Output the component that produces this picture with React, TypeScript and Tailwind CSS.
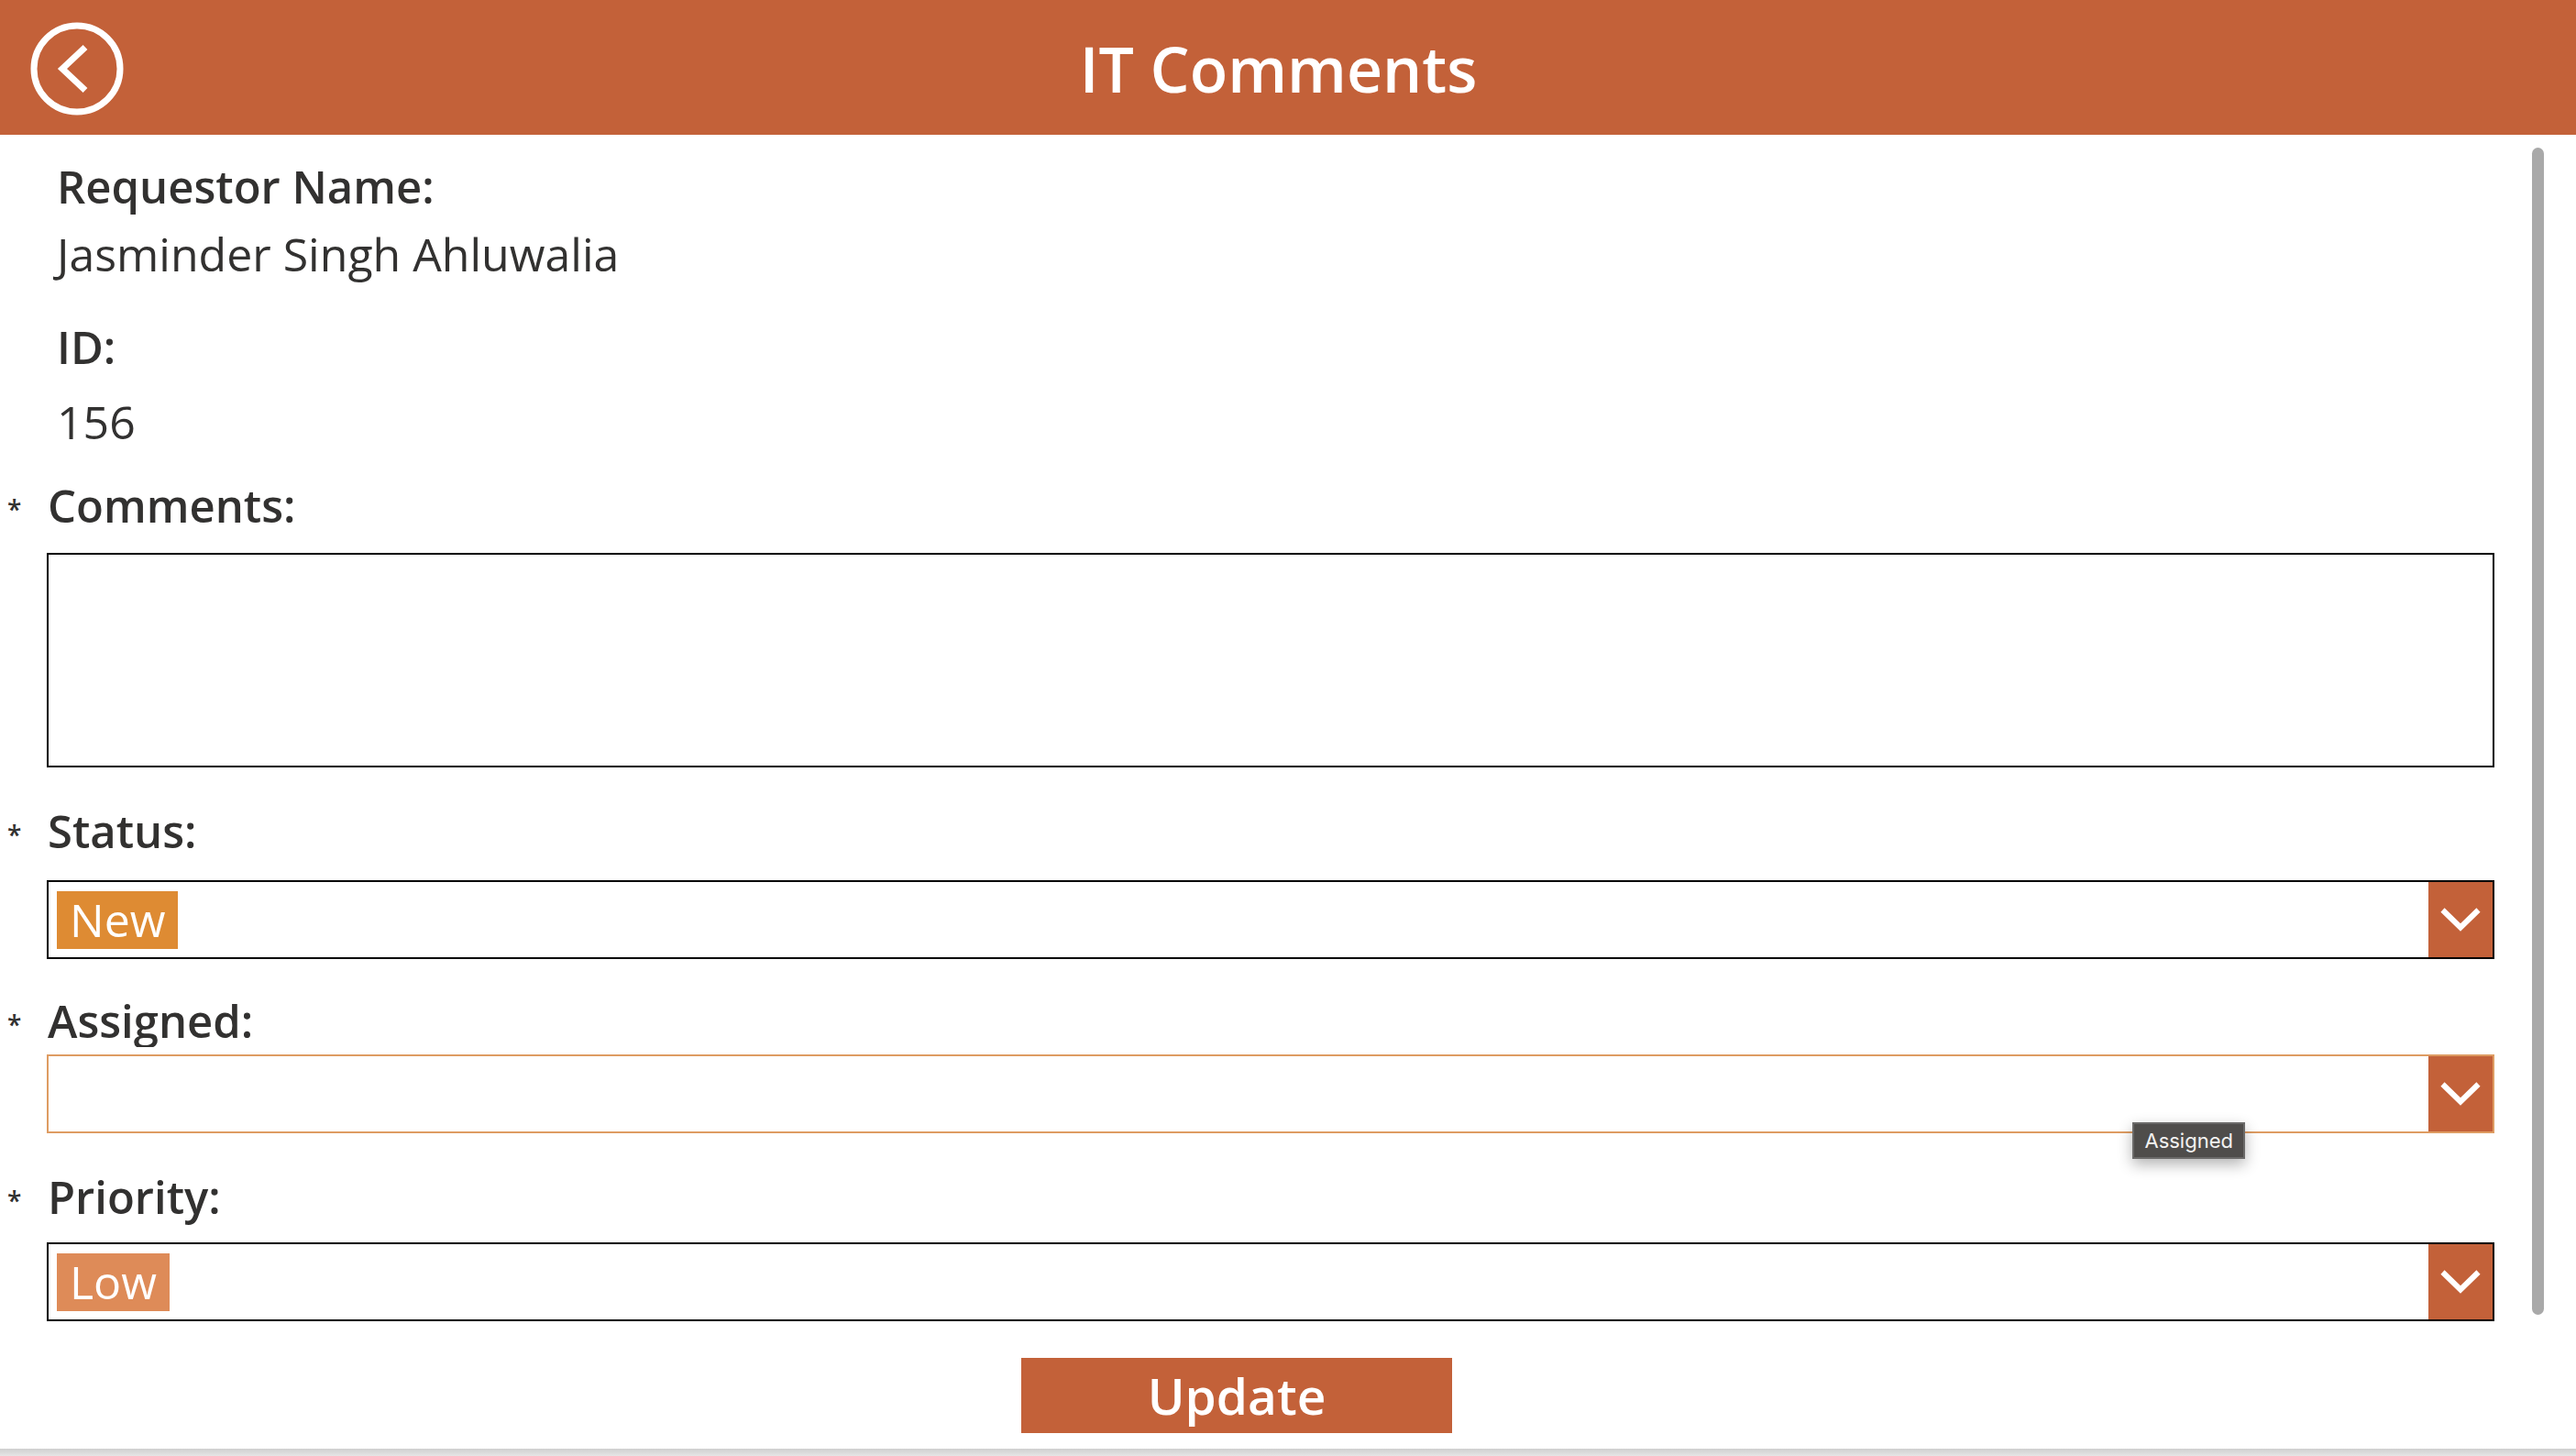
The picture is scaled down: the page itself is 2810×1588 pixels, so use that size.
import { useRef, useState } from "react";
import type { ReactNode } from "react";

function BackIcon() {
  return (
    <svg viewBox="0 0 102 102" className="size-[102px]" fill="none" stroke="white" aria-hidden="true">
      <circle cx="51" cy="51" r="47" strokeWidth="7" />
      <path d="M60 27.500 L35 51 L60 74.500" strokeWidth="7" />
    </svg>
  );
}

function ChevronDown() {
  return (
    <svg viewBox="0 0 44 26" className="h-[26px] w-[44px]" fill="none" stroke="white" strokeWidth="6" aria-hidden="true">
      <path d="M2.500 2.500 L22 21.500 L41.500 2.500" />
    </svg>
  );
}

function Detail({ label, children }: { label: string; children: ReactNode }) {
  return (
    <>
      <dt className="text-[49px] leading-[64px] font-semibold">{label}</dt>
      <dd className="text-[50px] leading-[64px]">{children}</dd>
    </>
  );
}

function FieldLabel({ htmlFor, children }: { htmlFor: string; children: string }) {
  return (
    <div className="flex h-16">
      <span className="w-[52px] shrink-0 pl-2 text-[28px] leading-[72px] font-semibold" aria-hidden="true">
        *
      </span>
      <label htmlFor={htmlFor} className="text-[49px] leading-[64px] font-semibold">
        {children}
      </label>
    </div>
  );
}

type DropDownProps = {
  id: string;
  options: string[];
  initial: string;
  boxClass: string;
  selectClass: string;
};

function DropDown({ id, options, initial, boxClass, selectClass }: DropDownProps) {
  const [value, setValue] = useState(initial);
  const ref = useRef<HTMLSelectElement>(null);
  return (
    <div className={`ml-[51px] flex h-[86px] items-center border-2 bg-white pl-[9px] ${boxClass}`}>
      <select
        id={id}
        ref={ref}
        required
        value={value}
        onChange={(e) => setValue(e.target.value)}
        className={`h-[63px] appearance-none text-[50px] leading-[63px] outline-none ${selectClass}`}
      >
        {options.map((o) => (
          <option key={o} value={o} className="bg-white text-[#323130]">
            {o}
          </option>
        ))}
      </select>
      <button
        type="button"
        aria-label={`Open ${id} list`}
        onClick={() => ref.current?.showPicker()}
        className="ml-auto flex h-full w-[70px] shrink-0 items-center justify-center bg-[#c36139]"
      >
        <ChevronDown />
      </button>
    </div>
  );
}

export default function App() {
  return (
    <div className="flex min-h-screen flex-col bg-white font-['Open_Sans','Noto_Sans',sans-serif] text-[#323130]">
      <header className="flex h-[147px] items-center bg-[#c36139] pt-[2px] pr-[156px] pl-[33px] text-white">
        <button type="button" aria-label="Back" className="rounded-full">
          <BackIcon />
        </button>
        <h1 className="flex-1 text-center text-[68px] leading-[80px] font-semibold">IT Comments</h1>
      </header>

      <form className="flex flex-1 flex-col" onSubmit={(e) => e.preventDefault()}>
        <div className="flex pr-[35px]">
          <div className="min-w-0 flex-1 pt-6">
            <dl className="flex flex-col gap-[10px] pl-[62px]">
              <div className="flex flex-col gap-[10px]">
                <Detail label="Requestor Name:">Jasminder Singh Ahluwalia</Detail>
              </div>
              <div className="flex flex-col gap-[18px] pt-[27px]">
                <Detail label="ID:">156</Detail>
              </div>
            </dl>

            <div className="mt-[27px] flex flex-col gap-5">
              <FieldLabel htmlFor="comments">Comments:</FieldLabel>
              <textarea
                id="comments"
                required
                className="ml-[51px] block h-[234px] resize-none border-2 border-black p-3 text-[50px] outline-none"
              />
            </div>

            <div className="mt-[37px] flex flex-col gap-[22px]">
              <FieldLabel htmlFor="status">Status:</FieldLabel>
              <DropDown
                id="status"
                options={["New", "In Progress", "Completed"]}
                initial="New"
                boxClass="border-black"
                selectClass="field-sizing-content bg-[#de8b33] pr-[14px] pl-[14px] text-white"
              />
            </div>

            <div className="relative mt-[35px] flex flex-col gap-2">
              <div className="h-[61px] overflow-hidden">
                <FieldLabel htmlFor="assigned">Assigned:</FieldLabel>
              </div>
              <DropDown
                id="assigned"
                options={["", "IT Support"]}
                initial=""
                boxClass="border-[#de9c62]"
                selectClass="flex-1"
              />
              <div
                role="tooltip"
                className="absolute right-[272px] -bottom-7 border-2 border-[#6b6a69] bg-[#4f4d4b] px-[11px] font-['Inter',sans-serif] text-[22px] leading-[36px] text-[#f3f2f1] shadow-[0_6px_16px_rgba(0,0,0,0.3)]"
              >
                Assigned
              </div>
            </div>

            <div className="mt-[37px] flex flex-col gap-[18px]">
              <FieldLabel htmlFor="priority">Priority:</FieldLabel>
              <DropDown
                id="priority"
                options={["Low", "Medium", "High"]}
                initial="Low"
                boxClass="border-black"
                selectClass="field-sizing-content bg-[#de8b58] pr-[14px] pl-[14px] text-white"
              />
            </div>
          </div>

          <div className="mt-[14px] mb-[7px] ml-[41px] w-[13px] shrink-0 rounded-full bg-[#a9a9a9]" />
        </div>

        <div className="mt-10 flex justify-center pr-[112px] pb-[17px]">
          <button
            type="submit"
            className="h-[82px] w-[470px] bg-[#c36139] text-[55px] leading-[82px] font-semibold text-white"
          >
            Update
          </button>
        </div>
      </form>

      <div className="h-2 bg-linear-to-b from-[#cfcfcf] to-[#e6e6e6]" />
    </div>
  );
}
